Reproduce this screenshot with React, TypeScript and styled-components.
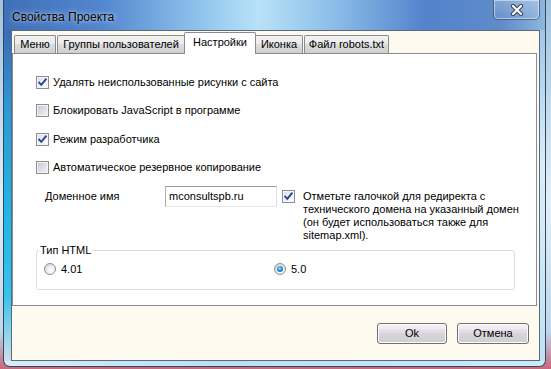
import React from "react";
import styled, { createGlobalStyle } from "styled-components";

const GlobalStyle = createGlobalStyle`
  html, body { margin: 0; padding: 0; }
  body {
    width: 551px; height: 369px; overflow: hidden;
    font-family: "Liberation Sans", Arial, sans-serif;
    font-size: 11px; color: #000;
    background: #bcd6ea;
  }
`;

const Desktop = styled.div`
  width: 551px; height: 369px; box-sizing: border-box;
  padding: 0 5px 2px 3px;
  display: flex;
  background: linear-gradient(180deg, #9fc3df 0%, #e2eff7 55%, #bcd6ea 90%, #c9677a 100%);
`;

const Window = styled.div`
  flex: 1; display: flex; flex-direction: column;
  border: 1px solid #36475d; border-top: none;
  border-radius: 0 0 7px 7px;
  overflow: hidden;
  background: linear-gradient(90deg, #3f6fb8 0%, #5286cf 18%, #8fc3ec 36%, #b9e2f8 47%, #8fc0ea 60%, #5283cb 78%, #5f8bc8 92%, #8fb6de 100%);
`;

const TitleBar = styled.div`
  height: 30px; flex-shrink: 0;
  display: flex; justify-content: space-between; align-items: flex-start;
  padding-left: 8px;
`;

const TitleText = styled.div`
  margin-top: 10px;
  font-size: 12px; line-height: 14px;
  text-shadow: 0 0 6px rgba(255,255,255,0.7), 0 0 2px rgba(255,255,255,0.5);
`;

const CloseButton = styled.div`
  width: 47px; height: 20px; box-sizing: border-box; margin-right: 5px;
  border: 1px solid rgba(40, 52, 72, 0.6); border-top: none;
  border-radius: 0 0 5px 5px;
  box-shadow: inset 0 0 0 1px rgba(255,255,255,0.45);
  background: linear-gradient(180deg, rgba(255,255,255,0.25), rgba(255,255,255,0.06));
  display: flex; align-items: center; justify-content: center;
`;

const Body = styled.div`
  flex: 1; display: flex; min-height: 0;
`;

const LeftFrame = styled.div`
  width: 7px; flex-shrink: 0;
  background: linear-gradient(180deg, #3b6cb6 0%, #2a9bd6 25%, #1fb6e6 55%, #34c3ec 80%, #cfe0ec 100%);
`;

const RightFrame = styled.div`
  flex: 1;
  background: linear-gradient(180deg, #9fc6ea 0%, #d8eef9 40%, #bfe2f6 100%);
`;

const BottomFrame = styled.div`
  height: 5px; flex-shrink: 0;
  background: linear-gradient(90deg, #d6ecf8 0%, #b7e2f7 40%, #c8ebfa 100%);
`;

const Client = styled.div`
  width: 529px; height: 331px; box-sizing: border-box; flex-shrink: 0;
  border: 1px solid #5c6979;
  background: #fffaf0;
  display: flex; flex-direction: column;
  padding: 1px 2px 0 0;
`;

const TabStrip = styled.div`
  height: 21px; display: flex; align-items: flex-end; gap: 1px;
  padding-left: 2px;
`;

const Tab = styled.div<{ $w: number; $active?: boolean }>`
  width: ${(p) => p.$w}px; box-sizing: border-box; flex-shrink: 0;
  height: ${(p) => (p.$active ? 22 : 18)}px;
  margin: ${(p) => (p.$active ? "0 -2px -1px -2px" : "0")};
  position: relative; z-index: ${(p) => (p.$active ? 2 : 1)};
  border: 1px solid #898c95; border-bottom: none;
  border-radius: 2px 2px 0 0;
  background: ${(p) =>
    p.$active ? "#ffffff" : "linear-gradient(180deg, #f3f3f3 0%, #ebebeb 45%, #dddddd 50%, #cfcfcf 100%)"};
  display: flex; justify-content: center; align-items: ${(p) => (p.$active ? "flex-start" : "center")};
  padding-top: ${(p) => (p.$active ? 3 : 0)}px;
  line-height: 13px; white-space: nowrap;
`;

const Panel = styled.div`
  width: 525px; height: 253px; box-sizing: border-box;
  border: 1px solid #898c95;
  background: #ffffff;
  padding: 21px 0 0 23px;
  display: flex; flex-direction: column;
`;

const CheckList = styled.div`
  display: flex; flex-direction: column; gap: 14.5px;
`;

const CheckRow = styled.label`
  display: flex; align-items: center; gap: 4px;
  height: 14px; line-height: 13px; white-space: nowrap;
`;

const Box = styled.span<{ $checked?: boolean }>`
  width: 13px; height: 13px; box-sizing: border-box; flex-shrink: 0;
  border: 1px solid #8e8f8f;
  box-shadow: inset 0 0 0 1px #f4f4f4;
  background: ${(p) =>
    p.$checked
      ? "linear-gradient(135deg, #d9dde6 0%, #f2f3f6 55%, #ffffff 100%)"
      : "linear-gradient(135deg, #cbc2d6 0%, #e4dde9 55%, #f6f3f7 100%)"};
  display: flex; align-items: center; justify-content: center;
`;

const DomainRow = styled.div`
  display: flex; align-items: flex-start;
  margin: 11px 0 0 9px;
`;

const DomainLabel = styled.div`
  width: 120px; flex-shrink: 0;
  margin-top: 4px; line-height: 13px;
`;

const TextInput = styled.div`
  width: 112px; height: 21px; box-sizing: border-box; flex-shrink: 0;
  border: 1px solid #abadb3; border-top-color: #9a9ca3;
  border-right-color: #dbdfe6; border-bottom-color: #e3e9ef;
  background: #fff;
  padding: 3px 0 0 3px; line-height: 13px;
`;

const RedirectCheck = styled.div`
  display: flex; align-items: flex-start; gap: 8px;
  margin: 4px 0 0 5px;
`;

const Note = styled.div`
  line-height: 13px; white-space: nowrap;
`;

const GroupBox = styled.fieldset`
  width: 479px; box-sizing: border-box;
  margin: 2px 0 0 0; padding: 0 0 13px 2px;
  border: 1px solid #d5dfe5; border-radius: 3px;
  min-inline-size: 0;
`;

const Legend = styled.legend`
  padding: 0 1px; line-height: 13px; font-size: 11px;
`;

const RadioRow = styled.div`
  display: grid; grid-template-columns: 230px auto;
  padding: 6px 0 0 5px;
`;

const RadioItem = styled.label`
  display: flex; align-items: center; gap: 5px; line-height: 13px;
`;

const Radio = styled.span`
  width: 12px; height: 12px; box-sizing: border-box; border-radius: 50%;
  border: 1px solid #8e8f8f;
  background: radial-gradient(circle at 60% 65%, #ffffff 0%, #eeeef2 45%, #c4c4cc 100%);
  display: flex; align-items: center; justify-content: center; flex-shrink: 0;
`;

const RadioDot = styled.span`
  width: 6px; height: 6px; border-radius: 50%;
  background: radial-gradient(circle at 45% 40%, #a6e2ff 0%, #2a95dc 45%, #0c4a8e 100%);
`;

const ButtonRow = styled.div`
  display: flex; justify-content: flex-end; gap: 10px;
  margin-top: 17px; padding-right: 8px;
`;

const Button = styled.div<{ $w: number }>`
  width: ${(p) => p.$w}px; height: 21px; box-sizing: border-box;
  border: 1px solid #707070; border-radius: 3px;
  box-shadow: inset 0 0 0 1px #fbfbfb;
  background: linear-gradient(180deg, #f3f2f4 0%, #efebf1 28%, #e6d9ec 30%, #e4dbe9 46%, #d6d6d6 50%, #cfcfcf 100%);
  display: flex; align-items: center; justify-content: center;
  line-height: 13px;
`;

const Check = () => (
  <svg width="9" height="9" viewBox="0 0 9 9">
    <path d="M1.2 4.6 L3.3 6.9 L7.8 1.4" fill="none" stroke="#25449e" strokeWidth="1.9" strokeLinecap="square" />
  </svg>
);

const CheckBox = ({ checked }: { checked?: boolean }) => (
  <Box $checked={checked}>{checked ? <Check /> : null}</Box>
);

const CloseX = () => (
  <svg width="14" height="12" viewBox="0 0 14 12">
    <path d="M3 2 L11 10 M11 2 L3 10" stroke="#3a4456" strokeWidth="4.2" strokeLinecap="round" />
    <path d="M3 2 L11 10 M11 2 L3 10" stroke="#ffffff" strokeWidth="2.2" strokeLinecap="round" />
  </svg>
);

const options = [
  { text: "Удалять неиспользованные рисунки с сайта", checked: true },
  { text: "Блокировать JavaScript в программе", checked: false },
  { text: "Режим разработчика", checked: true },
  { text: "Автоматическое резервное копирование", checked: false },
];

const tabs = [
  { label: "Меню", w: 42 },
  { label: "Группы пользователей", w: 128 },
  { label: "Настройки", w: 72, active: true },
  { label: "Иконка", w: 48 },
  { label: "Файл robots.txt", w: 85 },
];

export default function App() {
  return (
    <>
      <GlobalStyle />
      <Desktop>
        <Window>
          <TitleBar>
            <TitleText>Свойства Проекта</TitleText>
            <CloseButton>
              <CloseX />
            </CloseButton>
          </TitleBar>
          <Body>
            <LeftFrame />
            <Client>
              <TabStrip>
                {tabs.map((t) => (
                  <Tab key={t.label} $w={t.w} $active={t.active}>
                    {t.label}
                  </Tab>
                ))}
              </TabStrip>
              <Panel>
                <CheckList>
                  {options.map((o) => (
                    <CheckRow key={o.text}>
                      <CheckBox checked={o.checked} />
                      {o.text}
                    </CheckRow>
                  ))}
                </CheckList>
                <DomainRow>
                  <DomainLabel>Доменное имя</DomainLabel>
                  <TextInput>mconsultspb.ru</TextInput>
                  <RedirectCheck>
                    <CheckBox checked />
                    <Note>
                      Отметьте галочкой для редиректа с<br />
                      технического домена на указанный домен<br />
                      (он будет использоваться также для<br />
                      sitemap.xml).
                    </Note>
                  </RedirectCheck>
                </DomainRow>
                <GroupBox>
                  <Legend>Тип HTML</Legend>
                  <RadioRow>
                    <RadioItem>
                      <Radio />
                      4.01
                    </RadioItem>
                    <RadioItem>
                      <Radio>
                        <RadioDot />
                      </Radio>
                      5.0
                    </RadioItem>
                  </RadioRow>
                </GroupBox>
              </Panel>
              <ButtonRow>
                <Button $w={70}>Ok</Button>
                <Button $w={72}>Отмена</Button>
              </ButtonRow>
            </Client>
            <RightFrame />
          </Body>
          <BottomFrame />
        </Window>
      </Desktop>
    </>
  );
}
